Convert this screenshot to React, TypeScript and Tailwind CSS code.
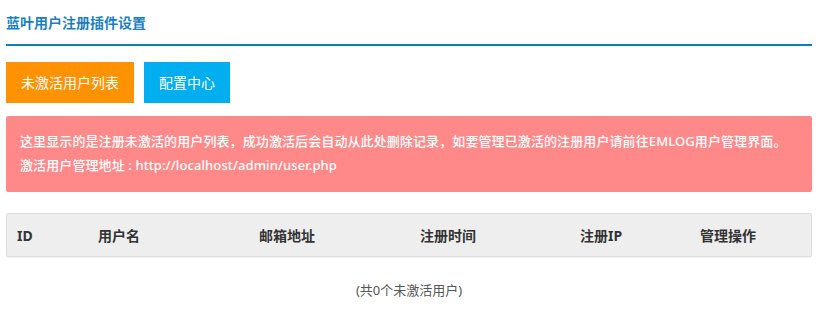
import React from 'react';

const font = { fontFamily: '"Noto Sans", "Noto Sans CJK SC", sans-serif' };

const columns = [
  { label: 'ID', width: 'w-[81px]' },
  { label: '用户名', width: 'w-[161px]' },
  { label: '邮箱地址', width: 'w-[161px]' },
  { label: '注册时间', width: 'w-[160px]' },
  { label: '注册IP', width: 'w-[120px]' },
  { label: '管理操作', width: 'flex-1' },
];

const App: React.FC = () => {
  return (
    <div className="w-[818px] h-[312px] bg-white px-[6px] text-[#333] overflow-hidden" style={font}>
      {/* Title */}
      <div className="pt-[13px] pb-[12px] border-b-2 border-[#0c7fbf]">
        <h3 className="text-[14px] leading-[19px] font-bold text-[#1b7fc0]">蓝叶用户注册插件设置</h3>
      </div>

      {/* Tabs */}
      <div className="flex gap-[10px] mt-[16px]">
        <button className="w-[128px] h-[41px] bg-[#ff9200] text-white text-[14px]">未激活用户列表</button>
        <button className="w-[86px] h-[41px] bg-[#01aef0] text-white text-[14px]">配置中心</button>
      </div>

      {/* Notice */}
      <div className="mt-[13px] h-[76px] rounded-[2px] bg-[#ff8989] px-[14px] pt-[13px] text-white text-[13px] leading-[24px] font-medium tracking-[0.1px]">
        <p>这里显示的是注册未激活的用户列表，成功激活后会自动从此处删除记录，如要管理已激活的注册用户请前往EMLOG用户管理界面。</p>
        <p>激活用户管理地址 : http://localhost/admin/user.php</p>
      </div>

      {/* Table header */}
      <div className="mt-[21px] h-[44px] flex items-center bg-[#eeeeee] border border-[#dddddd] rounded-[2px] shadow-[0_1px_1px_rgba(0,0,0,0.05)]">
        {columns.map((c) => (
          <div key={c.label} className={`${c.width} pl-[10px] text-[14px] font-bold text-[#333]`}>
            {c.label}
          </div>
        ))}
      </div>

      {/* Footer */}
      <p className="mt-[24px] text-center text-[13px] leading-[18px] text-[#555]">(共0个未激活用户)</p>
    </div>
  );
};

export default App;
